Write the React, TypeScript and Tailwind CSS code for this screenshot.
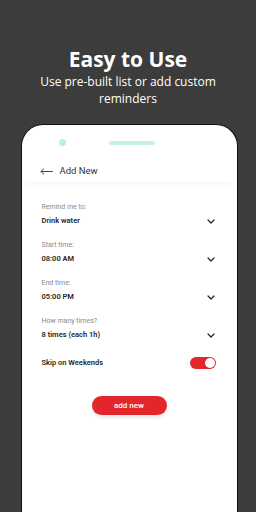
import React from "react";

function Chevron() {
  return (
    <svg width="8" height="5" viewBox="0 0 8 5" fill="none">
      <path d="M1 1l3 3 3-3" stroke="#222" strokeWidth="1.2" strokeLinecap="round" strokeLinejoin="round" />
    </svg>
  );
}

function Field({ label, value }: { label: string; value: string }) {
  return (
    <div className="flex flex-col h-[38px]">
      <div className="text-[7px] leading-[10px] text-[#8a8a8a]">{label}</div>
      <div className="flex items-center justify-between mt-[3px]">
        <span className="text-[7.5px] leading-[12px] font-semibold text-[#1f1f1f]">{value}</span>
        <span className="mr-[2px]"><Chevron /></span>
      </div>
    </div>
  );
}

export default function App() {
  return (
    <div className="w-[256px] h-[512px] bg-[#3c3c3c] overflow-hidden flex flex-col items-center" style={{ fontFamily: "Roboto, 'Liberation Sans', sans-serif" }}>
      <div className="pt-[46px] text-white text-[21px] leading-[26px] font-bold" style={{ fontFamily: "'Open Sans', sans-serif" }}>Easy to Use</div>
      <div className="text-white text-[12px] leading-[17px] text-center mt-[1px]" style={{ fontFamily: "'Open Sans', sans-serif" }}>
        Use pre-built list or add custom<br />reminders
      </div>
      <div className="mt-[17px] ml-[2px] w-[217px] flex-1 bg-white rounded-t-[22px] border-[1.5px] border-b-0 border-[#111] flex flex-col">
        <div className="flex items-center h-[35px]">
          <div className="ml-[37px] w-[7px] h-[7px] rounded-full bg-[#b9f0dd]" />
          <div className="ml-[43px] w-[46px] h-[4px] rounded-full bg-[#c6f3e4]" />
        </div>
        <div className="flex items-center h-[22px] pl-[18px] shadow-[0_6px_8px_-6px_rgba(0,0,0,0.08)]">
          <svg width="13" height="7" viewBox="0 0 13 7" fill="none">
            <path d="M12.5 3.5H1M3.8 0.8L1 3.5l2.8 2.7" stroke="#333" strokeWidth="0.9" strokeLinecap="round" strokeLinejoin="round" />
          </svg>
          <span className="ml-[7px] text-[9.5px] text-[#333]">Add New</span>
        </div>
        <div className="flex flex-col px-[20px] pt-[20px]">
          <Field label="Remind me to:" value="Drink water" />
          <Field label="Start time:" value="08:00 AM" />
          <Field label="End time:" value="05:00 PM" />
          <Field label="How many times?" value="8 times (each 1h)" />
          <div className="flex items-center justify-between mt-[3px]">
            <span className="text-[7.5px] font-semibold text-[#1f1f1f]">Skip on Weekends</span>
            <div className="w-[26px] h-[12px] rounded-full bg-[#e3262c] relative mr-[1px]">
              <div className="absolute right-[1px] top-[1px] w-[10px] h-[10px] rounded-full bg-white" />
            </div>
          </div>
        </div>
        <div className="flex justify-center mt-[27px]">
          <div className="w-[75px] h-[19px] rounded-full bg-[#e3262c] text-white text-[8px] font-medium flex items-center justify-center shadow-[0_2px_4px_rgba(0,0,0,0.12)]">add new</div>
        </div>
      </div>
    </div>
  );
}
